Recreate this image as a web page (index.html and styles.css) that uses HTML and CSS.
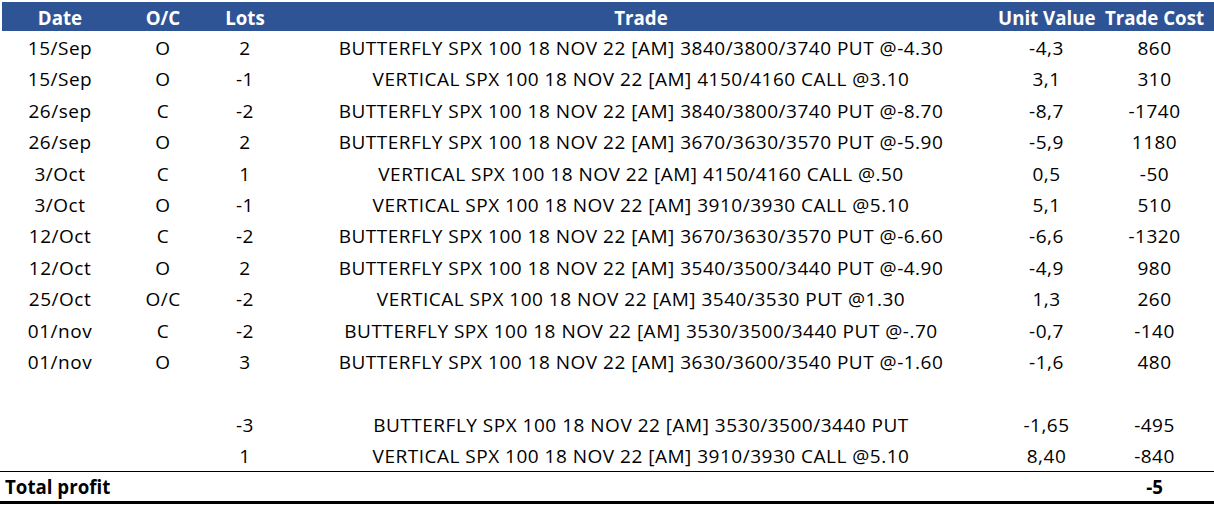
FILE: index.html
```html
<!DOCTYPE html>
<html>
<head>
<meta charset="utf-8">
<link rel="stylesheet" href="styles.css">
</head>
<body>
<table class="sheet">
  <colgroup>
    <col class="c-date"><col class="c-oc"><col class="c-lots"><col class="c-trade"><col class="c-unit"><col class="c-cost">
  </colgroup>
  <thead>
    <tr class="head">
      <th class="first">Date</th><th>O/C</th><th>Lots</th><th>Trade</th><th>Unit Value</th><th>Trade Cost</th>
    </tr>
  </thead>
  <tbody>
    <tr><td>15/Sep</td><td>O</td><td>2</td><td>BUTTERFLY SPX 100 18 NOV 22 [AM] 3840/3800/3740 PUT @-4.30</td><td>-4,3</td><td>860</td></tr>
    <tr><td>15/Sep</td><td>O</td><td>-1</td><td>VERTICAL SPX 100 18 NOV 22 [AM] 4150/4160 CALL @3.10</td><td>3,1</td><td>310</td></tr>
    <tr><td>26/sep</td><td>C</td><td>-2</td><td>BUTTERFLY SPX 100 18 NOV 22 [AM] 3840/3800/3740 PUT @-8.70</td><td>-8,7</td><td>-1740</td></tr>
    <tr><td>26/sep</td><td>O</td><td>2</td><td>BUTTERFLY SPX 100 18 NOV 22 [AM] 3670/3630/3570 PUT @-5.90</td><td>-5,9</td><td>1180</td></tr>
    <tr><td>3/Oct</td><td>C</td><td>1</td><td>VERTICAL SPX 100 18 NOV 22 [AM] 4150/4160 CALL @.50</td><td>0,5</td><td>-50</td></tr>
    <tr><td>3/Oct</td><td>O</td><td>-1</td><td>VERTICAL SPX 100 18 NOV 22 [AM] 3910/3930 CALL @5.10</td><td>5,1</td><td>510</td></tr>
    <tr><td>12/Oct</td><td>C</td><td>-2</td><td>BUTTERFLY SPX 100 18 NOV 22 [AM] 3670/3630/3570 PUT @-6.60</td><td>-6,6</td><td>-1320</td></tr>
    <tr><td>12/Oct</td><td>O</td><td>2</td><td>BUTTERFLY SPX 100 18 NOV 22 [AM] 3540/3500/3440 PUT @-4.90</td><td>-4,9</td><td>980</td></tr>
    <tr><td>25/Oct</td><td>O/C</td><td>-2</td><td>VERTICAL SPX 100 18 NOV 22 [AM] 3540/3530 PUT @1.30</td><td>1,3</td><td>260</td></tr>
    <tr><td>01/nov</td><td>C</td><td>-2</td><td>BUTTERFLY SPX 100 18 NOV 22 [AM] 3530/3500/3440 PUT @-.70</td><td>-0,7</td><td>-140</td></tr>
    <tr><td>01/nov</td><td>O</td><td>3</td><td>BUTTERFLY SPX 100 18 NOV 22 [AM] 3630/3600/3540 PUT @-1.60</td><td>-1,6</td><td>480</td></tr>
    <tr class="blank"><td>&nbsp;</td><td>&nbsp;</td><td>&nbsp;</td><td>&nbsp;</td><td>&nbsp;</td><td>&nbsp;</td></tr>
    <tr><td></td><td></td><td>-3</td><td>BUTTERFLY SPX 100 18 NOV 22 [AM] 3530/3500/3440 PUT</td><td>-1,65</td><td>-495</td></tr>
    <tr><td></td><td></td><td>1</td><td>VERTICAL SPX 100 18 NOV 22 [AM] 3910/3930 CALL @5.10</td><td>8,40</td><td>-840</td></tr>
    <tr class="total"><td class="label" colspan="5">Total profit</td><td>-5</td></tr>
  </tbody>
</table>
</body>
</html>
```
FILE: styles.css
```css
html, body {
  margin: 0;
  padding: 0;
  background: #ffffff;
}
.sheet {
  width: 1214px;
  table-layout: fixed;
  border-collapse: collapse;
  font-family: "Open Sans", "Liberation Sans", sans-serif;
  font-size: 19px;
  color: #000;
  margin-top: 2px;
}
.c-date { width: 120px; }
.c-oc { width: 86px; }
.c-lots { width: 78px; }
.c-trade { width: 714px; }
.c-unit { width: 97px; }
.c-cost { width: 119px; }
.sheet th, .sheet td {
  padding: 0;
  text-align: center;
  white-space: nowrap;
  overflow: visible;
}
.head th {
  background: #2f5496;
  color: #fff;
  font-weight: 700;
  font-size: 18.7px;
  padding-top: 2px;
  line-height: 27px;
}
.head th.first {
  box-shadow: inset 2px 0 #fff;
}
.sheet tbody td {
  padding-top: 4px;
  line-height: 27.4px;
  letter-spacing: 0.5px;
}
.sheet tbody tr.total td {
  border-top: 1px solid #000;
  border-bottom: 3px solid #000;
  font-weight: 700;
  font-size: 18.7px;
  letter-spacing: 0;
  padding-top: 1px;
  line-height: 28px;
}
.sheet tbody tr.total td.label {
  text-align: left;
  padding-left: 5px;
}
```
